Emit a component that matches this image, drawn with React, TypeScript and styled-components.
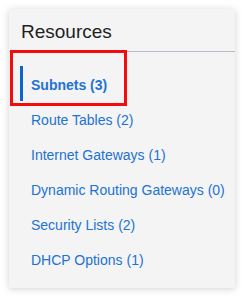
import styled, { createGlobalStyle } from 'styled-components';

const GlobalStyle = createGlobalStyle`
    body {
        margin: 0;
        background: #ffffff;
        font-family: "Liberation Sans", Arial, sans-serif;
    }
`;

type Resource = {
    label: string;
    count: number;
};

const resources: Resource[] = [
    { label: 'Subnets', count: 3 },
    { label: 'Route Tables', count: 2 },
    { label: 'Internet Gateways', count: 1 },
    { label: 'Dynamic Routing Gateways', count: 0 },
    { label: 'Security Lists', count: 2 },
    { label: 'DHCP Options', count: 1 },
];

export default function App() {
    const active = 0;

    return (
        <Page>
            <GlobalStyle />
            <Panel>
                <Header>Resources</Header>
                <List>
                    {resources.map((r, i) => (
                        <Item key={r.label} $active={i === active}>
                            <Link href="#" $active={i === active}>
                                {r.label} ({r.count})
                            </Link>
                        </Item>
                    ))}
                </List>
                <Highlight />
            </Panel>
        </Page>
    );
}

const Page = styled.div`
    padding: 9px;
    width: 246px;
    height: 298px;
    box-sizing: border-box;
`;

const Panel = styled.div`
    position: relative;
    width: 226px;
    height: 279px;
    background: #f4f4f4;
    box-shadow: 0 1px 7px rgba(0, 0, 0, 0.18);
    display: flex;
    flex-direction: column;
`;

const Header = styled.div`
    height: 43px;
    box-sizing: border-box;
    padding: 12px 12px 0;
    font-size: 19px;
    line-height: 22px;
    color: #1f1f1f;
    border-bottom: 1px solid #b3bcc8;
`;

const List = styled.ul`
    list-style: none;
    margin: 0;
    padding: 14px 0 0 11px;
`;

const Item = styled.li<{ $active: boolean }>`
    height: 35px;
    box-sizing: border-box;
    padding-top: 2px;
    display: flex;
    align-items: center;
    padding-left: 8px;
    border-left: 3px solid ${p => (p.$active ? '#0b67d0' : 'transparent')};
`;

const Link = styled.a<{ $active: boolean }>`
    font-size: 14px;
    font-weight: ${p => (p.$active ? 700 : 400)};
    color: #2272d3;
    text-decoration: none;
    white-space: nowrap;
`;

const Highlight = styled.div`
    position: absolute;
    left: 1px;
    top: 41px;
    width: 117px;
    height: 56px;
    box-sizing: border-box;
    border: 3px solid #f20c0c;
    pointer-events: none;
`;
